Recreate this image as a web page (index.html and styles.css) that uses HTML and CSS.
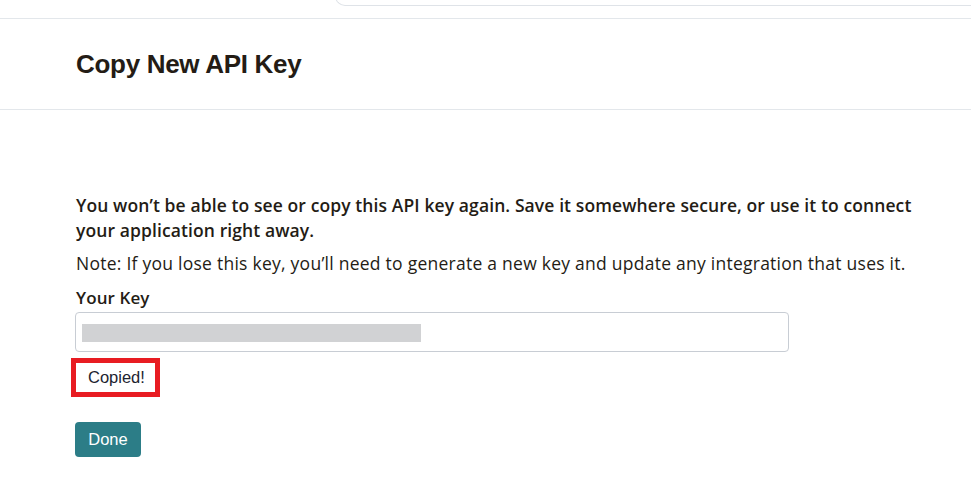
FILE: index.html
```html
<!DOCTYPE html>
<html>
<head>
<meta charset="utf-8">
<link rel="stylesheet" href="styles.css">
</head>
<body>
<div class="topbar">
  <div class="search"></div>
</div>
<header class="header">
  <h1 class="title">Copy New API Key</h1>
</header>
<main class="content">
  <p class="warn">You won’t be able to see or copy this API key again. Save it somewhere secure, or use it to connect your application right away.</p>
  <p class="note">Note: If you lose this key, you’ll need to generate a new key and update any integration that uses it.</p>
  <label class="label">Your Key</label>
  <div class="keybox"><span class="keymask"></span></div>
  <div class="copied">Copied!</div>
  <button class="done">Done</button>
</main>
</body>
</html>
```
FILE: styles.css
```css
* { box-sizing: border-box; }
html, body { margin: 0; padding: 0; background: #fff; }
body {
  font-family: "Open Sans", "Liberation Sans", sans-serif;
  color: #241c15;
  width: 971px;
  overflow: hidden;
}
.topbar {
  height: 19px;
  border-bottom: 1px solid #e3e7eb;
  display: flex;
  padding-left: 335px;
}
.search {
  flex: 1;
  height: 40px;
  margin-top: -34px;
  border: 1px solid #dfe3e8;
  border-radius: 10px 0 0 10px;
  border-right: none;
}
.header {
  height: 91px;
  border-bottom: 1px solid #e3e7eb;
  padding: 0 0 0 76px;
  display: flex;
  align-items: center;
}
.title {
  margin: 0;
  font-family: "Liberation Sans", Arial, sans-serif;
  font-weight: 700;
  font-size: 26px;
  letter-spacing: -0.3px;
  color: #241c15;
}
.content {
  padding: 83px 0 0 76px;
  display: flex;
  flex-direction: column;
  align-items: flex-start;
}
.warn {
  margin: 0;
  font-size: 17.5px;
  font-weight: 600;
  letter-spacing: 0.1px;
  line-height: 25px;
  width: 870px;
}
.note {
  margin: 8px 0 0;
  font-size: 17.5px;
  letter-spacing: 0.25px;
  line-height: 25px;
  width: 880px;
}
.label {
  margin-top: 9px;
  font-size: 17px;
  font-weight: 600;
  letter-spacing: 0.1px;
  line-height: 25px;
}
.keybox {
  margin-top: 2px;
  margin-left: -1px;
  width: 714px;
  height: 40px;
  border: 1px solid #c8cdd4;
  border-radius: 4px;
  padding: 11px 0 0 6px;
}
.keymask {
  display: block;
  width: 339px;
  height: 18px;
  background: #d1d2d4;
}
.copied {
  margin-top: 6px;
  margin-left: -5px;
  border: 5px solid #e81c22;
  padding: 3px 10px 3px 12px;
  font-family: "Liberation Sans", Arial, sans-serif;
  font-size: 16.5px;
  line-height: 23px;
  color: #1d2330;
}
.done {
  margin-top: 25px;
  margin-left: -1px;
  width: 66px;
  height: 35px;
  border: none;
  border-radius: 4px;
  background: #2c7d87;
  color: #fff;
  font-family: "Liberation Sans", Arial, sans-serif;
  font-size: 16.5px;
  padding: 0;
  cursor: pointer;
}
```
